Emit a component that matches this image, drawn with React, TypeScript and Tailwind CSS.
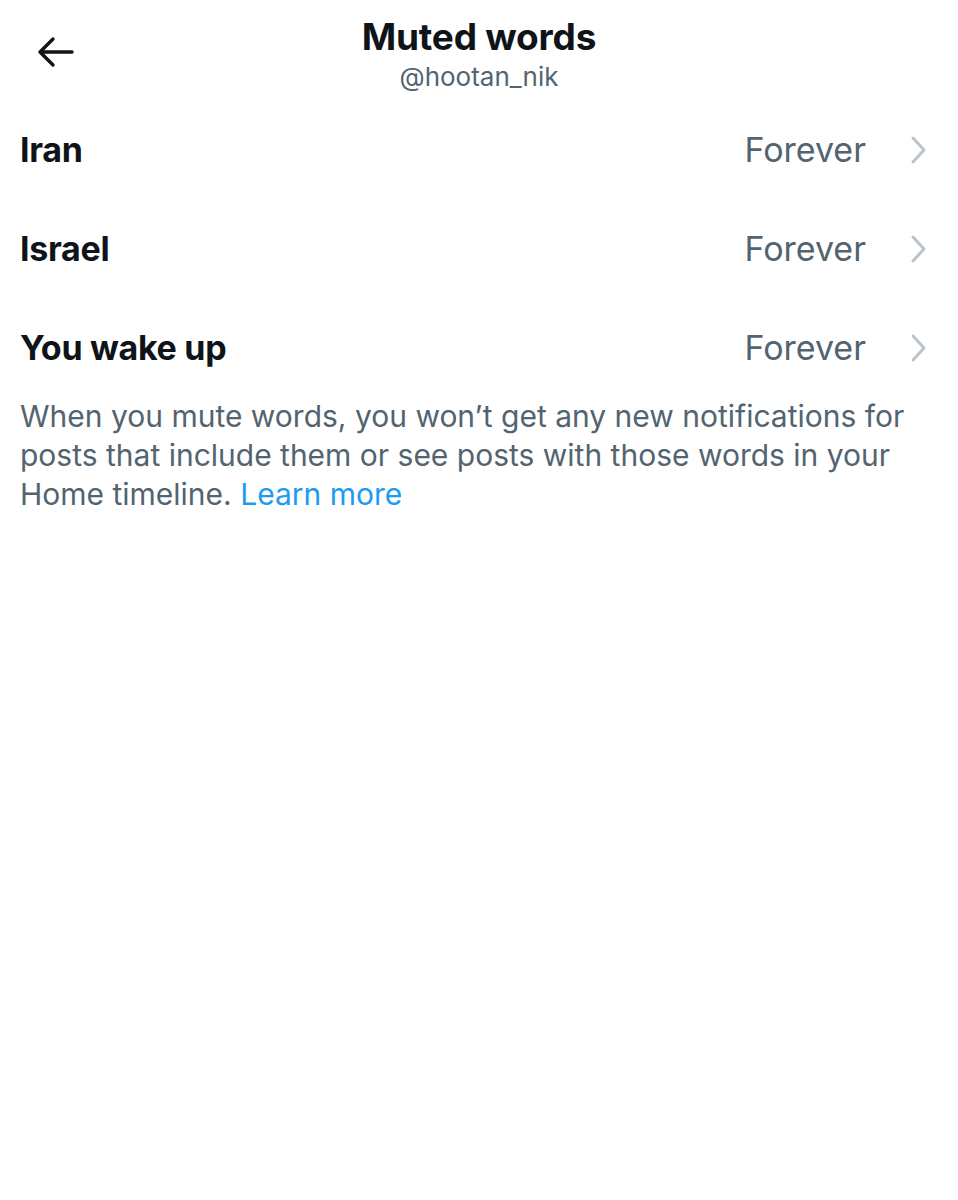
import React from 'react';

const words = ['Iran', 'Israel', 'You wake up'];

const Chevron = () => (
  <svg width="20" height="30" viewBox="0 0 20 30" fill="none" className="shrink-0">
    <path d="M5 3 L16 15 L5 27" stroke="#b9c4cb" strokeWidth="3" strokeLinecap="round" strokeLinejoin="round" />
  </svg>
);

const App = () => {
  return (
    <div className="min-h-screen w-[958px] bg-white text-[#0f1419] font-['Inter',sans-serif]">
      {/* Header */}
      <div className="relative flex flex-col items-center pt-[14px] h-[100px]">
        <button className="absolute left-[31px] top-[28px] p-1">
          <svg width="40" height="40" viewBox="0 0 40 40" fill="none">
            <path d="M37 20 H6 M18 7 L5 20 L18 33" stroke="#0f1419" strokeWidth="3.4" strokeLinecap="round" strokeLinejoin="round" />
          </svg>
        </button>
        <h1 className="text-[37px] leading-[46px] font-bold tracking-[-0.2px]">Muted words</h1>
        <p className="text-[26px] leading-[34px] text-[#536471]">@hootan_nik</p>
      </div>

      {/* Muted words list */}
      <div className="flex flex-col">
        {words.map((w) => (
          <div key={w} className="flex items-center h-[99px] pl-[20px] pr-[30px]">
            <span className="flex-1 text-[34px] font-bold tracking-[-0.3px]">{w}</span>
            <span className="text-[34px] text-[#536471] mr-[42px]">Forever</span>
            <Chevron />
          </div>
        ))}
      </div>

      <p className="px-[20px] text-[30px] leading-[39px] text-[#536471]">
        <span>
          When you mute words, you won’t get any new notifications for posts that include them or see posts with those words in your Home timeline.
        </span>{' '}
        <a className="text-[#1d9bf0]">Learn more</a>
      </p>
    </div>
  );
};

export default App;
